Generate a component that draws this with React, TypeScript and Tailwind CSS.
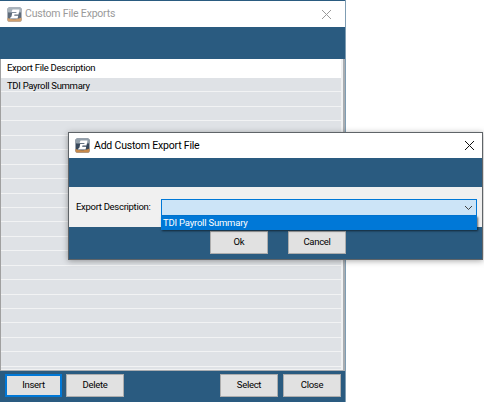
const rows = Array.from({ length: 20 }, (_, i) => i)

function AppIcon({ faded }: { faded?: boolean }) {
  return (
    <svg width="15" height="15" viewBox="0 0 15 15" className={`shrink-0 ${faded ? "opacity-80" : ""}`}>
      <rect x="0.5" y="0.5" width="14" height="14" rx="1.5" fill="#37475a" />
      <rect x="0.5" y="0.5" width="14" height="5" rx="1.5" fill="#93a0ab" />
      <path d="M0.5 11 C5 13 10 12.5 14.5 10.5 V13 a1.5 1.5 0 0 1 -1.5 1.5 H2 a1.5 1.5 0 0 1 -1.5 -1.5 Z" fill="#c98a4a" />
      <path d="M5.5 2.5 H12.5 L11.5 7.5 H7.5 L7.2 8.8 H11.2 L10.6 11.5 H2.5 L4.5 9.6 L5.2 6 H9.3 L9.5 5 H4.6 Z" fill="#ffffff" />
    </svg>
  )
}

function CloseIcon({ color }: { color: string }) {
  return (
    <svg width="11" height="11" viewBox="0 0 11 11" className="shrink-0">
      <path d="M1 1 L10 10 M10 1 L1 10" stroke={color} strokeWidth="1" fill="none" />
    </svg>
  )
}

function WinButton({ label, focused, width }: { label: string; focused?: boolean; width: string }) {
  return (
    <div
      className={`h-[23px] ${width} flex items-center justify-center bg-[#e1e1e1] text-[9.5px] tracking-[-0.3px] text-black ${
        focused ? "border-2 border-[#0078d7]" : "border border-[#adadad]"
      }`}
    >
      {label}
    </div>
  )
}

export default function App() {
  return (
    <div className="relative w-[484px] h-[402px] bg-white overflow-hidden font-['Roboto',sans-serif]">
      {/* back window */}
      <div className="w-[346px] h-[402px] flex flex-col bg-[#2a5b80] border-r border-[#7f9db3]">
        <div className="h-[27px] shrink-0 bg-white border-t border-[#2a5b80] flex items-center pl-[7px] pr-[13px]">
          <AppIcon faded />
          <span className="ml-[3px] text-[10.5px] tracking-[-0.2px] text-[#9a9a9a]">Custom File Exports</span>
          <span className="ml-auto">
            <CloseIcon color="#9a9a9a" />
          </span>
        </div>
        <div className="h-[32px] shrink-0" />
        <div className="h-[312px] shrink-0 bg-[#a9adb1] border-l border-[#a0a0a0] pr-[2px] pb-[1px]">
          <div className="h-full flex flex-col overflow-hidden bg-[#dfe2e6] border-r-2 border-b border-[#f0f1f2]">
            <div className="h-[19px] shrink-0 flex items-center bg-white pl-[6px] text-[9.5px] tracking-[-0.3px] text-black">
              Export File Description
            </div>
            {rows.map((i) => (
              <div
                key={i}
                className="h-[14.45px] shrink-0 flex items-center pl-[6px] pt-[2px] text-[9.5px] tracking-[-0.3px] text-black border-b border-[#f2f3f4]"
              >
                {i === 0 ? "TDI Payroll Summary" : ""}
              </div>
            ))}
          </div>
        </div>
        <div className="flex-1 flex items-center pl-[5px] pr-[4px] pb-[2px]">
          <WinButton label="Insert" focused width="w-[57px]" />
          <div className="ml-[4px]">
            <WinButton label="Delete" width="w-[58px]" />
          </div>
          <div className="ml-auto flex gap-[5px]">
            <WinButton label="Select" width="w-[58px]" />
            <WinButton label="Close" width="w-[58px]" />
          </div>
        </div>
      </div>

      {/* dialog on top */}
      <div className="absolute left-[68px] top-[132px] w-[415px] h-[128px] flex flex-col bg-[#2a5b80] border border-[#5f6468] shadow-[0_1px_6px_rgba(0,0,0,0.35)]">
        <div className="h-[25px] shrink-0 bg-white flex items-center pl-[6px] pr-[7px]">
          <AppIcon />
          <span className="ml-[4px] text-[10.5px] tracking-[-0.2px] text-black">Add Custom Export File</span>
          <span className="ml-auto">
            <CloseIcon color="#111111" />
          </span>
        </div>
        <div className="h-[29px] shrink-0" />
        <div className="relative h-[40px] shrink-0 bg-[#f0f0f0] flex items-start pt-[12px] pl-[7px]">
          <span className="w-[85px] h-[17px] flex items-center whitespace-nowrap text-[9.5px] tracking-[-0.3px] text-black">Export Description:</span>
          <div className="relative w-[316px] h-[17px] bg-[#cce4f7] border border-[#0078d7] flex items-center justify-end pr-[3px]">
            <svg width="9" height="6" viewBox="0 0 9 6" className="shrink-0">
              <path d="M1 1 L4.5 4.5 L8 1" stroke="#404040" strokeWidth="1" fill="none" />
            </svg>
            <div className="absolute left-[-1px] top-[16px] w-[316px] h-[14px] bg-[#0078d7] pl-[2px] flex items-center text-[9.5px] tracking-[-0.2px] text-white shadow-[1px_1px_2px_rgba(0,0,0,0.6)]">
              TDI Payroll Summary
            </div>
          </div>
        </div>
        <div className="flex pl-[141px] pt-[4px] gap-[20px]">
          <WinButton label="Ok" width="w-[58px]" />
          <WinButton label="Cancel" width="w-[58px]" />
        </div>
      </div>
    </div>
  )
}
